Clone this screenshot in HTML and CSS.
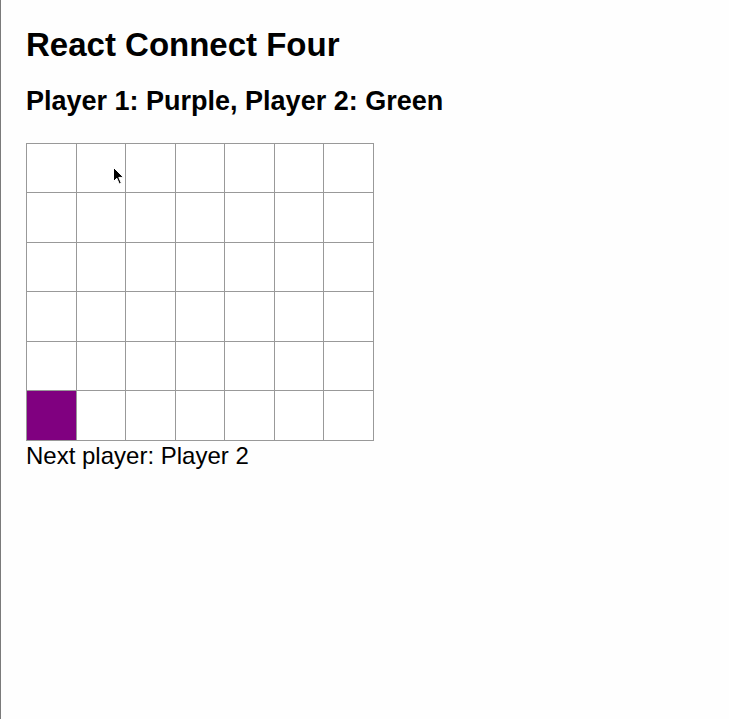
FILE: index.html
```html
<!DOCTYPE html>
<html lang="en">
<head>
<meta charset="utf-8">
<title>React Connect Four</title>
<link rel="stylesheet" href="styles.css">
</head>
<body>
<div class="page">
  <h1 class="title">React Connect Four</h1>
  <h2 class="subtitle">Player 1: Purple, Player 2: Green</h2>
  <div class="board">
    <div class="cell"></div><div class="cell"></div><div class="cell"></div><div class="cell"></div><div class="cell"></div><div class="cell"></div><div class="cell"></div>
    <div class="cell"></div><div class="cell"></div><div class="cell"></div><div class="cell"></div><div class="cell"></div><div class="cell"></div><div class="cell"></div>
    <div class="cell"></div><div class="cell"></div><div class="cell"></div><div class="cell"></div><div class="cell"></div><div class="cell"></div><div class="cell"></div>
    <div class="cell"></div><div class="cell"></div><div class="cell"></div><div class="cell"></div><div class="cell"></div><div class="cell"></div><div class="cell"></div>
    <div class="cell"></div><div class="cell"></div><div class="cell"></div><div class="cell"></div><div class="cell"></div><div class="cell"></div><div class="cell"></div>
    <div class="cell cell-purple"></div><div class="cell"></div><div class="cell"></div><div class="cell"></div><div class="cell"></div><div class="cell"></div><div class="cell"></div>
  </div>
  <div class="status">Next player: Player 2</div>
  <svg class="cursor" width="12" height="20" viewBox="0 0 12 20" aria-hidden="true">
    <path d="M0.5 0.5 L0.5 14.5 L3.8 11.2 L6.3 17 L8.3 16.1 L5.8 10.4 L10.5 10.4 Z" fill="#000" stroke="#fff" stroke-width="1"/>
  </svg>
</div>
</body>
</html>
```
FILE: styles.css
```css
html, body {
  margin: 0;
  padding: 0;
  background: #fefefe;
}

.page {
  position: relative;
  box-sizing: border-box;
  min-height: 719px;
  border-left: 1px solid #7a7a7a;
  padding: 1px 0 0 25px;
  font-family: "Liberation Sans", Arial, sans-serif;
  color: #000;
}

.title {
  margin: 25px 0 0;
  font-size: 33px;
  font-weight: bold;
  line-height: 38px;
}

.subtitle {
  margin: 22px 0 0;
  font-size: 27px;
  font-weight: bold;
  line-height: 31px;
}

.board {
  display: grid;
  grid-template-columns: 50px 49px 50px 49px 50px 49px 50px;
  grid-template-rows: 49px 50px 49px 50px 49px 50px;
  width: max-content;
  margin-top: 26px;
  border-top: 1px solid #999;
  border-left: 1px solid #999;
}

.cell {
  border-right: 1px solid #999;
  border-bottom: 1px solid #999;
  background: #fff;
}

.cell-purple {
  background: #800080;
}

.status {
  font-size: 24px;
  line-height: 30px;
}

.cursor {
  position: absolute;
  left: 112px;
  top: 167px;
}
```
